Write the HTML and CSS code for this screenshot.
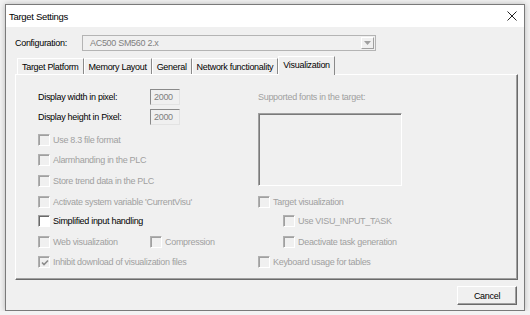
FILE: index.html
```html
<!DOCTYPE html>
<html>
<head>
<meta charset="utf-8">
<link rel="stylesheet" href="styles.css">
</head>
<body>
<div class="window">
  <div class="titlebar">
    <span class="title">Target Settings</span>
    <svg class="close" width="10" height="10" viewBox="0 0 10 10"><path d="M0.5 0.5 L9.5 9.5 M9.5 0.5 L0.5 9.5" stroke="#222" stroke-width="1" fill="none"/></svg>
  </div>
  <div class="content">
    <div class="config">
      <span class="config-label">Configuration:</span>
      <div class="combo">
        <span class="combo-text">AC500 SM560 2.x</span>
        <span class="combo-btn"><svg width="7" height="4" viewBox="0 0 7 4"><path d="M0 0 H7 L3.5 4 Z" fill="#a0a0a0"/></svg></span>
      </div>
    </div>
    <div class="tabs">
      <span class="tab">Target Platform</span>
      <span class="tab">Memory Layout</span>
      <span class="tab">General</span>
      <span class="tab">Network functionality</span>
      <span class="tab tab-active">Visualization</span>
    </div>
    <div class="panel">
      <div class="grid">
        <div class="field r1"><span class="field-label">Display width in pixel:</span><span class="num">2000</span></div>
        <div class="field r2"><span class="field-label">Display height in Pixel:</span><span class="num">2000</span></div>
        <div class="check r3 dis"><span class="box"></span>Use 8.3 file format</div>
        <div class="check r4 dis"><span class="box"></span>Alarmhanding in the PLC</div>
        <div class="check r5 dis"><span class="box"></span>Store trend data in the PLC</div>
        <div class="check r6 dis"><span class="box"></span>Activate system variable 'CurrentVisu'</div>
        <div class="check r7"><span class="box"></span>Simplified input handling</div>
        <div class="check r8 dis pair"><span class="pair-item"><span class="box"></span>Web visualization</span><span class="pair-item"><span class="box"></span>Compression</span></div>
        <div class="check r9 dis"><span class="box box-checked"><svg width="8" height="8" viewBox="0 0 8 8"><path d="M1 3.5 L3 5.5 L7 1.5" stroke="#8c8c8c" stroke-width="1.6" fill="none"/></svg></span>Inhibit download of visualization files</div>

        <div class="fonts-label r1 c2">Supported fonts in the target:</div>
        <div class="listbox c2"></div>
        <div class="check r6 c2 dis"><span class="box"></span>Target visualization</div>
        <div class="check r7 c2 dis indent"><span class="box"></span>Use VISU_INPUT_TASK</div>
        <div class="check r8 c2 dis indent"><span class="box"></span>Deactivate task generation</div>
        <div class="check r9 c2 dis"><span class="box"></span>Keyboard usage for tables</div>
      </div>
    </div>
    <div class="footer">
      <button class="btn">Cancel</button>
    </div>
  </div>
</div>
</body>
</html>
```
FILE: styles.css
```css
* { box-sizing: border-box; }

body {
  margin: 0;
  padding: 4px 0 0 5px;
  background: #f3f3f3;
  font-family: "Liberation Sans", Arial, sans-serif;
  font-size: 9px;
  letter-spacing: -0.3px;
  color: #000;
}

.window {
  width: 520px;
  height: 307px;
  border: 1px solid #7a7a7a;
  background: #f0f0f0;
  box-shadow: 0 0 6px rgba(0, 0, 0, 0.25);
  display: flex;
  flex-direction: column;
}

.titlebar {
  height: 22px;
  flex: none;
  background: #fff;
  display: flex;
  align-items: center;
  justify-content: space-between;
  padding: 0 7px 0 3px;
}

.title {
  font-size: 9.5px;
  letter-spacing: -0.3px;
}

.content {
  flex: 1;
  display: flex;
  flex-direction: column;
  padding: 8px 6px 5px 9px;
}

.config {
  display: flex;
  align-items: center;
  height: 16px;
}

.config-label {
  width: 67px;
}

.combo {
  width: 294px;
  height: 16px;
  border: 1px solid #b4b4b4;
  background: #f0f0f0;
  display: flex;
  align-items: center;
  justify-content: space-between;
  padding: 0 1px 0 7px;
}

.combo-text {
  color: #808080;
}

.combo-btn {
  width: 13px;
  height: 12px;
  border: 1px solid;
  border-color: #fff #a0a0a0 #a0a0a0 #fff;
  display: flex;
  align-items: center;
  justify-content: center;
}

.tabs {
  margin-top: 5px;
  height: 18px;
  display: flex;
  align-items: flex-end;
  padding-left: 2px;
  position: relative;
  z-index: 1;
}

.tab {
  height: 16px;
  display: flex;
  align-items: center;
  padding: 0 4px 0 4px;
  border-top: 1px solid #fff;
  border-left: 1px solid #fff;
  border-right: 1px solid #8a8a8a;
  white-space: nowrap;
}

.tab-active {
  height: 19px;
  margin-bottom: -1px;
  background: #f0f0f0;
  padding-bottom: 2px;
}

.panel {
  height: 206px;
  flex: none;
  border: 1px solid;
  border-color: #fff #6a6a6a #6a6a6a #fff;
  box-shadow: inset -1px -1px #a0a0a0;
  padding: 12px 0 0 22px;
}

.grid {
  display: grid;
  grid-template-columns: 220px 1fr;
  grid-template-rows: 20px 23px 20px 21px 21px 19px 21px 20px 20px;
}

.r1 { grid-row: 1; }
.r2 { grid-row: 2; }
.r3 { grid-row: 3; }
.r4 { grid-row: 4; }
.r5 { grid-row: 5; }
.r6 { grid-row: 6; }
.r7 { grid-row: 7; }
.r8 { grid-row: 8; }
.r9 { grid-row: 9; }
.c2 { grid-column: 2; }

.field,
.check,
.fonts-label {
  height: 20px;
  align-self: start;
  display: flex;
  align-items: center;
  white-space: nowrap;
}

.field-label {
  width: 112px;
}

.num {
  width: 30px;
  height: 16px;
  border: 1px solid;
  border-color: #8a8a8a #e3e3e3 #e3e3e3 #8a8a8a;
  color: #808080;
  padding-left: 3px;
  display: flex;
  align-items: center;
}

.dis {
  color: #a0a0a0;
}

.box {
  width: 12px;
  height: 12px;
  flex: none;
  margin-right: 3px;
  border: 1px solid;
  border-color: #a0a0a0 #fff #fff #a0a0a0;
  box-shadow: inset 1px 1px #696969;
  background: #fff;
  display: flex;
  align-items: center;
  justify-content: center;
  padding: 1px 0 0 1px;
}

.dis .box {
  background: #f0f0f0;
  border-color: #b0b0b0 #fff #fff #b0b0b0;
  box-shadow: inset 1px 1px #a0a0a0;
}

.pair-item {
  display: flex;
  align-items: center;
}

.pair-item:first-child {
  width: 112px;
}

.indent {
  padding-left: 25px;
}

.fonts-label {
  color: #a0a0a0;
}

.listbox {
  grid-row: 2 / 6;
  margin-top: 6px;
  width: 144px;
  height: 73px;
  border: 1px solid;
  border-color: #a0a0a0 #fff #fff #a0a0a0;
  box-shadow: inset 1px 1px #7a7a7a;
  background: #f0f0f0;
}

.footer {
  margin-top: 6px;
  display: flex;
  justify-content: flex-end;
  padding-right: 1px;
}

.btn {
  width: 60px;
  height: 19px;
  font-family: "Liberation Sans", Arial, sans-serif;
  font-size: 9px;
  letter-spacing: -0.3px;
  color: #000;
  background: #f0f0f0;
  border: 1px solid;
  border-color: #fff #6a6a6a #6a6a6a #fff;
  box-shadow: inset -1px -1px #a0a0a0;
  padding: 0;
}
```
